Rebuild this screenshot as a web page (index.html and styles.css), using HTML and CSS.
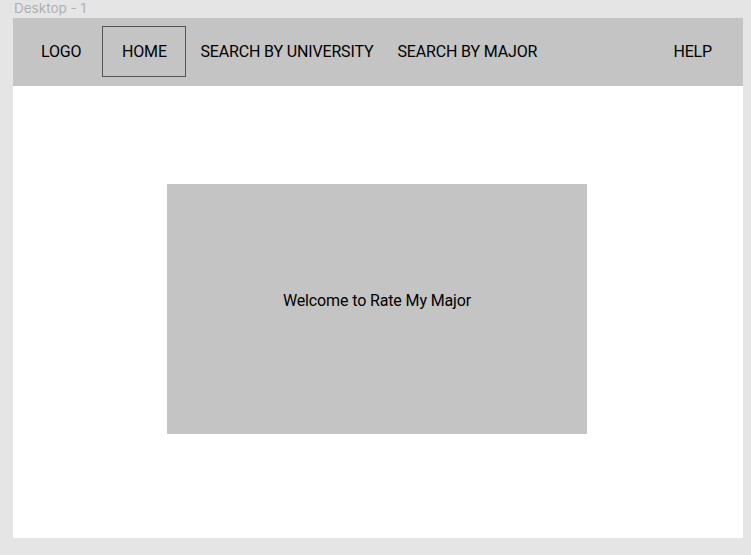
FILE: index.html
```html
<!DOCTYPE html>
<html lang="en">
<head>
<meta charset="utf-8">
<title>Desktop - 1</title>
<link rel="stylesheet" href="styles.css">
</head>
<body>
<div class="frame-label">Desktop - 1</div>
<div class="frame">
  <nav class="nav">
    <span class="nav-item logo">LOGO</span>
    <span class="nav-item home">HOME</span>
    <span class="nav-item univ">SEARCH BY UNIVERSITY</span>
    <span class="nav-item major">SEARCH BY MAJOR</span>
    <span class="nav-item help">HELP</span>
  </nav>
  <main class="content">
    <div class="hero">Welcome to Rate My Major</div>
  </main>
</div>
</body>
</html>
```
FILE: styles.css
```css
html, body {
  margin: 0;
  padding: 0;
}
body {
  background: #e5e5e5;
  font-family: Roboto, "Liberation Sans", sans-serif;
  width: 751px;
  height: 555px;
  overflow: hidden;
}
.frame-label {
  height: 18px;
  line-height: 17px;
  font-family: Inter, Roboto, sans-serif;
  font-size: 13.5px;
  color: #b0b0b0;
  padding-left: 14px;
}
.frame {
  margin-left: 13px;
  width: 730px;
  height: 520px;
  background: #ffffff;
  display: flex;
  flex-direction: column;
}
.nav {
  height: 68px;
  background: #c4c4c4;
  display: flex;
  align-items: center;
  padding: 0 31px 1px 28px;
  box-sizing: border-box;
  font-size: 16px;
  line-height: 19px;
  letter-spacing: -0.15px;
  color: #000;
}
.nav-item {
  white-space: nowrap;
}
.logo {
  margin-right: 21px;
}
.home {
  box-sizing: border-box;
  height: 51px;
  width: 84px;
  border: 1px solid #555555;
  display: flex;
  align-items: center;
  justify-content: center;
  margin-right: 14px;
}
.univ {
  margin-right: 24px;
}
.help {
  margin-left: auto;
}
.content {
  flex: 1;
  padding-top: 98px;
  padding-left: 154px;
}
.hero {
  box-sizing: border-box;
  width: 420px;
  height: 250px;
  background: #c4c4c4;
  padding-top: 107px;
  text-align: center;
  font-size: 16px;
  line-height: 19px;
  letter-spacing: -0.13px;
  color: #000;
}
```
